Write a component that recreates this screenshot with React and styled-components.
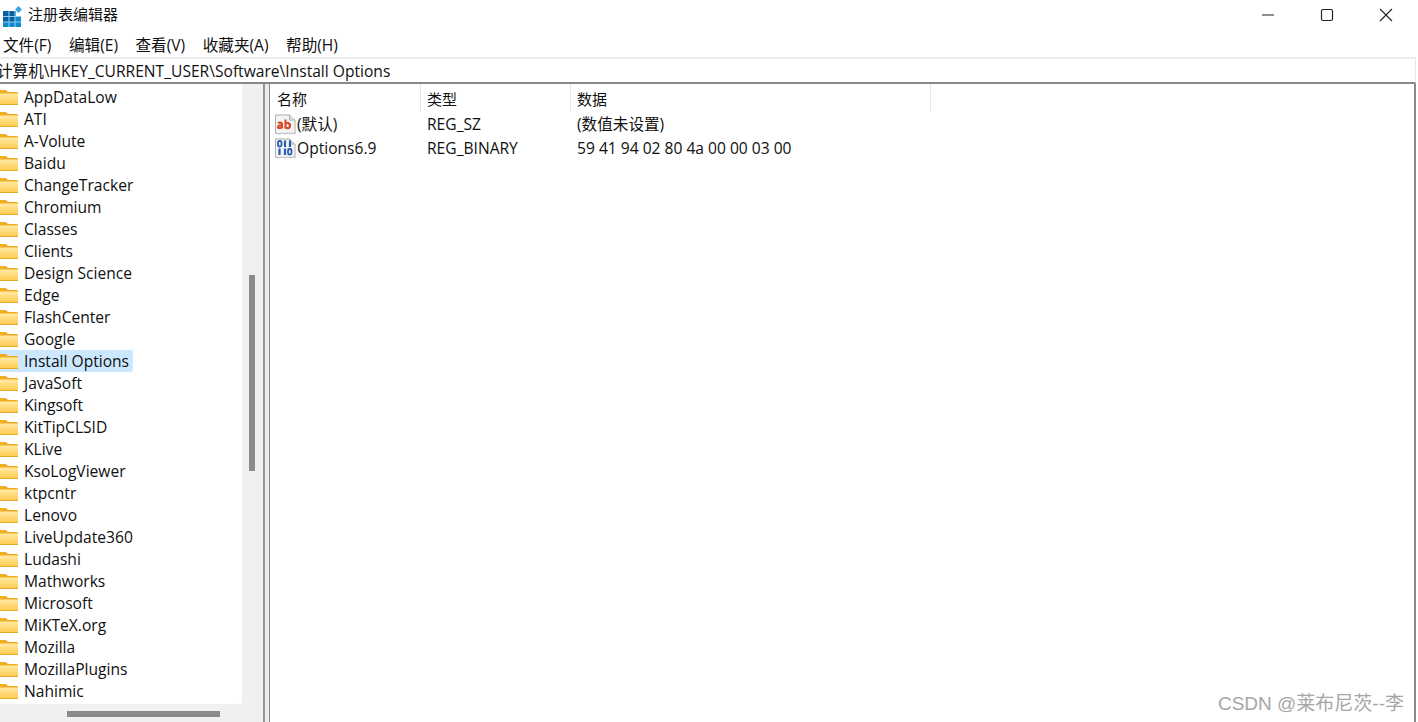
import React from 'react'
import styled, { createGlobalStyle } from 'styled-components'

const GlobalStyle = createGlobalStyle`
    html, body, #root {
        margin: 0;
        padding: 0;
        height: 100%;
        overflow: hidden;
        background: #fff;
    }
    body {
        font-family: "Open Sans", "Noto Sans CJK SC", sans-serif;
        font-size: 15.6px;
        color: #101010;
    }
`

const Window = styled.div`
    width: 1418px;
    height: 722px;
    display: flex;
    flex-direction: column;
    position: relative;
    overflow: hidden;
`

const TitleBar = styled.div`
    height: 30px;
    display: flex;
    align-items: center;
    padding-left: 2px;
    flex-shrink: 0;
`

const TitleText = styled.span`
    margin: -2px 0 0 5px;
    font-size: 15px;
    line-height: 20px;
    flex: 1;
`

const WindowButtons = styled.div`
    display: flex;
    margin: 0 3px 0 0;
`

const WindowButton = styled.div`
    width: 59px;
    height: 30px;
    display: flex;
    align-items: center;
    justify-content: center;
`

const MenuBar = styled.div`
    height: 27px;
    display: flex;
    align-items: center;
    padding: 2px 0 0 3px;
    box-sizing: border-box;
    gap: 17.5px;
    flex-shrink: 0;
    font-size: 15.6px;
`

const AddressBar = styled.div`
    height: 27px;
    margin-right: 2px;
    display: flex;
    align-items: center;
    box-sizing: border-box;
    border-top: 2px solid #ececec;
    border-right: 1px solid #e8e8e8;
    border-bottom: 2px solid #87898c;
    white-space: nowrap;
    overflow: hidden;
    flex-shrink: 0;
`

const AddressText = styled.span`
    margin-left: -3px;
`

const Panes = styled.div`
    flex: 1;
    display: flex;
    min-height: 0;
`

const TreePane = styled.div`
    width: 263px;
    display: grid;
    grid-template-columns: 242px 21px;
    grid-template-rows: 620px 18px;
    background: #f0f0f0;
    flex-shrink: 0;
`

const TreeList = styled.div`
    background: #fff;
    padding-top: 2px;
    overflow: hidden;
    border-bottom-right-radius: 3px;
`

const TreeRow = styled.div`
    width: fit-content;
    height: 22px;
    display: flex;
    align-items: center;
    white-space: nowrap;
    padding-right: 4px;
    background: ${({ selected }) => (selected ? '#cce8ff' : 'transparent')};
    border-radius: 0 2px 2px 0;
`

const TreeLabel = styled.span`
    margin-left: 6px;
    line-height: 22px;
`

const VScrollTrack = styled.div`
    padding: 191px 0 0 7px;
`

const VScrollThumb = styled.div`
    width: 6px;
    height: 196px;
    background: #8a8a8a;
`

const HScrollTrack = styled.div`
    padding: 7px 0 0 67px;
`

const HScrollThumb = styled.div`
    width: 153px;
    height: 6px;
    background: #8a8a8a;
`

const Corner = styled.div`
    background: #f0f0f0;
`

const Splitter = styled.div`
    width: 7px;
    box-sizing: border-box;
    border-left: 2px solid #94969a;
    border-right: 1px solid #87898c;
    background: #ececec;
    flex-shrink: 0;
`

const ListPane = styled.div`
    flex: 1;
    margin-right: 2px;
    border-right: 2px solid #87898c;
`

const ListHeader = styled.div`
    height: 28px;
    display: flex;
`

const HeaderCell = styled.div`
    width: ${({ w }) => w}px;
    box-sizing: border-box;
    padding-left: ${({ pad }) => pad}px;
    display: flex;
    align-items: center;
    border-right: 1px solid #e5e5e5;
    font-size: 15px;
`

const ListRow = styled.div`
    height: 24px;
    display: flex;
    align-items: center;
    line-height: 24px;
`

const NameCell = styled.div`
    width: 151px;
    padding-left: 5px;
    box-sizing: border-box;
    display: flex;
    align-items: center;
    gap: 1px;
`

const TypeCell = styled.div`
    width: 150px;
    padding-left: 6px;
    box-sizing: border-box;
`

const DataCell = styled.div`
    padding-left: 6px;
`

const Watermark = styled.div`
    position: absolute;
    right: 14px;
    bottom: 7px;
    font-family: "Liberation Sans", "Noto Sans CJK SC", sans-serif;
    font-size: 19px;
    color: #a6a6a6;
`

const RegeditIcon = () => (
    <svg width="21" height="24" viewBox="0 0 21 24">
        <rect x="1" y="8" width="18" height="16" fill="#0f8ad0" />
        <rect x="1" y="8" width="12" height="11" fill="#0b5f9e" />
        <path d="M1 13.500h18M1 19h18M7 8v16M13 8v16" stroke="#8fd0f2" strokeWidth="1" />
        <rect x="14" y="8" width="5" height="5" fill="#fff" />
        <path d="M16.500 3l3.500 3.500-3.500 3.500-3.500-3.500z" fill="#3fa3df" />
    </svg>
)

const FolderIcon = () => (
    <svg width="18" height="16" viewBox="0 0 18 16">
        <defs>
            <linearGradient id="folderFill" x1="0" y1="0" x2="0" y2="1">
                <stop offset="0" stopColor="#ffe9a6" />
                <stop offset="1" stopColor="#ffcd52" />
            </linearGradient>
        </defs>
        <path d="M0 1h6l2 2h9a1 1 0 0 1 1 1v3H0z" fill="#f0ae1e" />
        <path d="M0 4.500h18V15H0z" fill="url(#folderFill)" />
        <path d="M0 15h18v1H0z" fill="#e8a92f" />
    </svg>
)

const PageIcon = ({ children }) => (
    <svg width="21" height="21" viewBox="0 0 21 21">
        <path d="M0.500 1h14l5.500 5v14c-2-1.500-3.500-1-5 0-2-1.500-3-1-5 0-2-1.500-3-1-5 0-1-.5-2.500-.7-4.500-.5z" fill="#f4f4f4" stroke="#aeaeae" />
        <path d="M14.500 1v5h5.500" fill="#e2e2e2" stroke="#aeaeae" />
        {children}
    </svg>
)

const StringIcon = () => (
    <PageIcon>
        <path d="M3 9.200c1-1 4-1 4 .8v4.500M7 11.500c-2-.5-4 0-4 1.500s3 1.500 4 0M10.500 5.500v9M10.500 10c1-1.500 4.500-1.500 4.500 1.500s-3.500 3.500-4.500 1.500" fill="none" stroke="#d9492b" strokeWidth="2.200" />
    </PageIcon>
)

const BinaryIcon = () => (
    <PageIcon>
        <rect x="3" y="3" width="3.500" height="5.500" rx="1.500" fill="none" stroke="#2a5fb0" strokeWidth="1.800" />
        <path d="M10 2.500v6.500M15 2.500v6.500M4.500 10.500v6.500M10 10.500v6.500" stroke="#2a5fb0" strokeWidth="2.200" />
        <rect x="13" y="11" width="3.500" height="5.500" rx="1.500" fill="none" stroke="#2a5fb0" strokeWidth="1.800" />
    </PageIcon>
)

const treeItems = [
    'AppDataLow', 'ATI', 'A-Volute', 'Baidu', 'ChangeTracker', 'Chromium', 'Classes', 'Clients',
    'Design Science', 'Edge', 'FlashCenter', 'Google', 'Install Options', 'JavaSoft', 'Kingsoft',
    'KitTipCLSID', 'KLive', 'KsoLogViewer', 'ktpcntr', 'Lenovo', 'LiveUpdate360', 'Ludashi',
    'Mathworks', 'Microsoft', 'MiKTeX.org', 'Mozilla', 'MozillaPlugins', 'Nahimic',
]

const menus = ['文件(F)', '编辑(E)', '查看(V)', '收藏夹(A)', '帮助(H)']

const App = () => {
    return (
        <Window>
            <GlobalStyle />
            <TitleBar>
                <RegeditIcon />
                <TitleText>注册表编辑器</TitleText>
                <WindowButtons>
                    <WindowButton>
                        <svg width="14" height="2" viewBox="0 0 14 2"><path d="M1 1h12" stroke="#222" strokeWidth="1" /></svg>
                    </WindowButton>
                    <WindowButton>
                        <svg width="14" height="14" viewBox="0 0 14 14"><rect x="1.500" y="1.500" width="11" height="11" rx="1.500" fill="none" stroke="#222" strokeWidth="1.200" /></svg>
                    </WindowButton>
                    <WindowButton>
                        <svg width="14" height="14" viewBox="0 0 14 14"><path d="M1 1l12 12M13 1L1 13" stroke="#222" strokeWidth="1.100" /></svg>
                    </WindowButton>
                </WindowButtons>
            </TitleBar>
            <MenuBar>
                {menus.map((m) => <span key={m}>{m}</span>)}
            </MenuBar>
            <AddressBar>
                <AddressText>计算机\HKEY_CURRENT_USER\Software\Install Options</AddressText>
            </AddressBar>
            <Panes>
                <TreePane>
                    <TreeList>
                        {treeItems.map((item) => (
                            <TreeRow key={item} selected={item === 'Install Options'}>
                                <FolderIcon />
                                <TreeLabel>{item}</TreeLabel>
                            </TreeRow>
                        ))}
                    </TreeList>
                    <VScrollTrack><VScrollThumb /></VScrollTrack>
                    <HScrollTrack><HScrollThumb /></HScrollTrack>
                    <Corner />
                </TreePane>
                <Splitter />
                <ListPane>
                    <ListHeader>
                        <HeaderCell w={151} pad={7}>名称</HeaderCell>
                        <HeaderCell w={150} pad={6}>类型</HeaderCell>
                        <HeaderCell w={360} pad={6}>数据</HeaderCell>
                    </ListHeader>
                    <ListRow>
                        <NameCell><StringIcon />(默认)</NameCell>
                        <TypeCell>REG_SZ</TypeCell>
                        <DataCell>(数值未设置)</DataCell>
                    </ListRow>
                    <ListRow>
                        <NameCell><BinaryIcon />Options6.9</NameCell>
                        <TypeCell>REG_BINARY</TypeCell>
                        <DataCell>59 41 94 02 80 4a 00 00 03 00</DataCell>
                    </ListRow>
                </ListPane>
            </Panes>
            <Watermark>CSDN @莱布尼茨--李</Watermark>
        </Window>
    )
}

export default App
